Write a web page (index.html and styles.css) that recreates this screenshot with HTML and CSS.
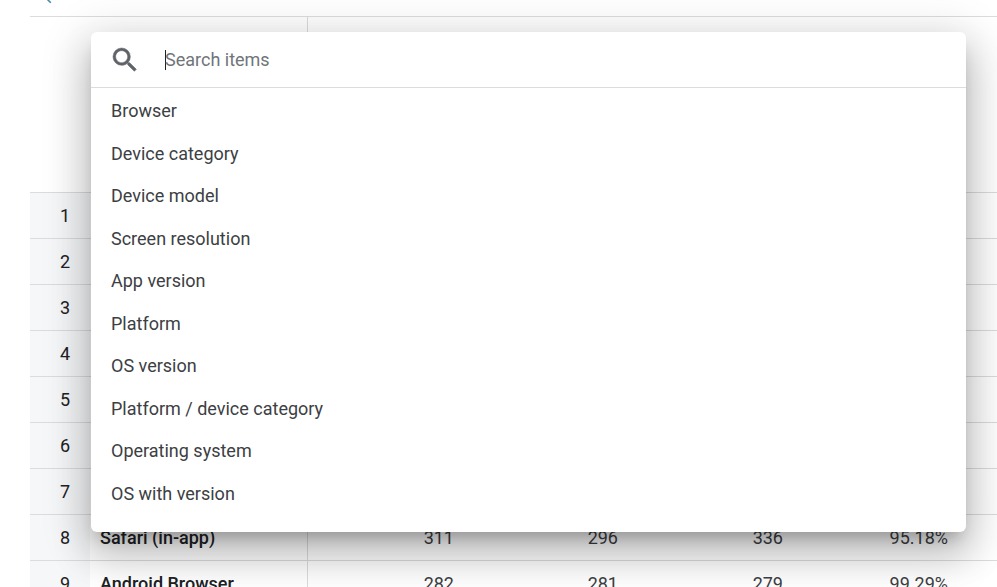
FILE: index.html
```html
<!DOCTYPE html>
<html lang="en">
<head>
  <meta charset="UTF-8">
  <title>Device report</title>
  <link rel="stylesheet" href="styles.css">
</head>
<body>
  <div class="topbar">
    <svg class="top-icon" width="18" height="18" viewBox="0 0 24 24"><path d="M15.5 14h-.79l-.28-.27A6.47 6.47 0 0 0 16 9.5 6.5 6.5 0 1 0 9.5 16c1.61 0 3.09-.59 4.23-1.57l.27.28v.79l5 4.99L20.49 19l-4.99-5zm-6 0C7.01 14 5 11.99 5 9.5S7.01 5 9.5 5 14 7.01 14 9.5 11.99 14 9.5 14z"/></svg>
  </div>

  <div class="report">
    <div class="head-row">
      <div class="head-label"></div>
      <div class="head-metrics"></div>
    </div>
    <div class="row"><div class="rank">1</div><div class="name"></div><div class="num"></div><div class="num"></div><div class="num"></div><div class="num"></div></div>
    <div class="row"><div class="rank">2</div><div class="name"></div><div class="num"></div><div class="num"></div><div class="num"></div><div class="num"></div></div>
    <div class="row"><div class="rank">3</div><div class="name"></div><div class="num"></div><div class="num"></div><div class="num"></div><div class="num"></div></div>
    <div class="row"><div class="rank">4</div><div class="name"></div><div class="num"></div><div class="num"></div><div class="num"></div><div class="num"></div></div>
    <div class="row"><div class="rank">5</div><div class="name"></div><div class="num"></div><div class="num"></div><div class="num"></div><div class="num"></div></div>
    <div class="row"><div class="rank">6</div><div class="name"></div><div class="num"></div><div class="num"></div><div class="num"></div><div class="num"></div></div>
    <div class="row"><div class="rank">7</div><div class="name"></div><div class="num"></div><div class="num"></div><div class="num"></div><div class="num"></div></div>
    <div class="row"><div class="rank">8</div><div class="name">Safari (in-app)</div><div class="num">311</div><div class="num">296</div><div class="num">336</div><div class="num">95.18%</div></div>
    <div class="row"><div class="rank">9</div><div class="name">Android Browser</div><div class="num">282</div><div class="num">281</div><div class="num">279</div><div class="num">99.29%</div></div>
  </div>

  <div class="picker">
    <div class="search">
      <svg class="search-icon" width="32" height="32" viewBox="0 0 24 24"><path d="M15.5 14h-.79l-.28-.27A6.47 6.47 0 0 0 16 9.5 6.5 6.5 0 1 0 9.5 16c1.61 0 3.09-.59 4.23-1.57l.27.28v.79l5 4.99L20.49 19l-4.99-5zm-6 0C7.01 14 5 11.99 5 9.5S7.01 5 9.5 5 14 7.01 14 9.5 11.99 14 9.5 14z"/></svg>
      <span class="caret"></span>
      <span class="placeholder">Search items</span>
    </div>
    <ul class="items">
      <li>Browser</li>
      <li>Device category</li>
      <li>Device model</li>
      <li>Screen resolution</li>
      <li>App version</li>
      <li>Platform</li>
      <li>OS version</li>
      <li>Platform / device category</li>
      <li>Operating system</li>
      <li>OS with version</li>
    </ul>
  </div>
</body>
</html>
```

FILE: styles.css
```css
html, body {
  height: 100%;
}
body {
  margin: 0;
  background: #fff;
  font-family: Roboto, "Liberation Sans", sans-serif;
  color: #202124;
  overflow: hidden;
}
.topbar {
  height: 16px;
  padding-left: 30px;
  overflow: hidden;
}
.top-icon {
  display: block;
  margin: -12px 0 0 6px;
  fill: #4a86ad;
}
.report {
  margin-left: 30px;
  border-top: 1px solid #dadce0;
}
.head-row {
  display: flex;
  height: 175px;
}
.head-label {
  width: 277px;
  border-right: 1px solid #dadce0;
}
.head-metrics {
  flex: 1;
}
.row {
  display: flex;
  align-items: center;
  height: 45px;
  border-top: 1px solid #dadce0;
  font-size: 18px;
  line-height: 47px;
}
.rank {
  align-self: stretch;
  width: 60px;
  display: flex;
  align-items: center;
  justify-content: center;
  padding-left: 10px;
  box-sizing: border-box;
  background: #f6f7f8;
}
.name {
  align-self: stretch;
  width: 218px;
  display: flex;
  align-items: center;
  padding-left: 10px;
  box-sizing: border-box;
  border-right: 1px solid #dadce0;
  font-weight: 500;
}
.num {
  width: 165px;
  text-align: right;
  color: #3c4043;
}
.num:nth-child(3) {
  width: 146px;
}
.num:nth-child(4) {
  width: 164px;
}
.picker {
  position: absolute;
  top: 32px;
  left: 91px;
  width: 875px;
  height: 500px;
  background: #fff;
  border-radius: 6px;
  box-shadow: 0 24px 38px 3px rgba(0, 0, 0, 0.16), 0 9px 46px 8px rgba(0, 0, 0, 0.14), 0 11px 15px -7px rgba(0, 0, 0, 0.24);
}
.search {
  display: flex;
  align-items: center;
  height: 55px;
  padding-left: 18px;
  border-bottom: 1px solid #dadce0;
}
.search-icon {
  fill: #5f6368;
  stroke: #5f6368;
  stroke-width: 0.4;
  flex: none;
}
.caret {
  width: 1px;
  height: 20px;
  margin-left: 24px;
  background: #202124;
}
.placeholder {
  margin-left: -1px;
  font-size: 18px;
  color: #70757a;
}
.items {
  list-style: none;
  margin: 0;
  padding: 2px 0 0;
}
.items li {
  height: 42.5px;
  line-height: 42.5px;
  padding-left: 20px;
  font-size: 18px;
  color: #3c4043;
}
```
